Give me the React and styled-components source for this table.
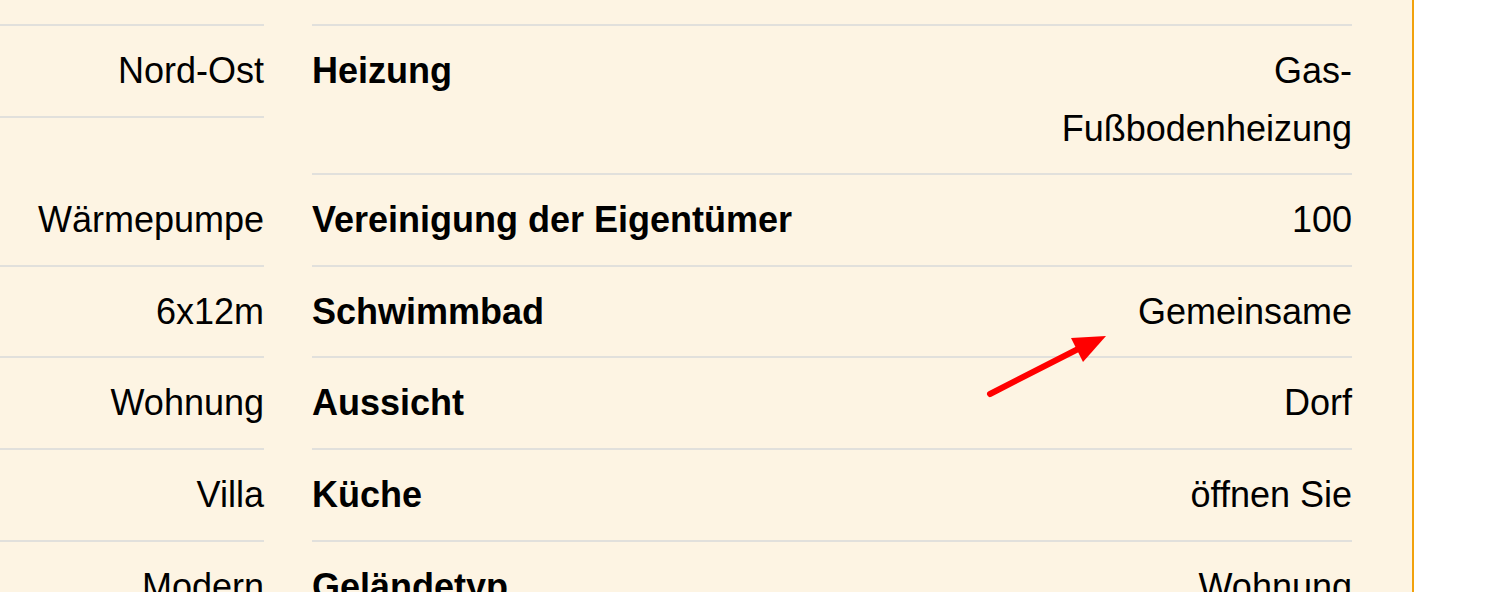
import React from "react";
import styled, { createGlobalStyle } from "styled-components";

const GlobalStyle = createGlobalStyle`
  html, body {
    margin: 0;
    padding: 0;
    background: #ffffff;
    overflow: hidden;
  }
  body {
    font-family: "Liberation Sans", Arial, sans-serif;
  }
`;

const Panel = styled.section`
  position: relative;
  box-sizing: border-box;
  width: 1414px;
  min-height: 592px;
  padding: 24px 60px 0 0;
  background: #fdf4e3;
  border-right: 2px solid #f2a20c;
  display: flex;
  gap: 48px;
  color: #000;
`;

const Column = styled.div`
  width: ${(p) => p.width || "auto"};
  flex: ${(p) => (p.grow ? 1 : "none")};
  display: flex;
  flex-direction: column;
`;

const Row = styled.div`
  display: flex;
  justify-content: space-between;
  align-items: ${(p) => (p.bottom ? "flex-end" : "flex-start")};
  min-height: ${(p) => (p.lines || 1) * 57.6}px;
  padding: 16px 0;
  border-top: 2px solid #e1e0dc;
  font-size: 36px;
  line-height: 1.6;
`;

const Label = styled.span`
  font-weight: 700;
`;

const Value = styled.span`
  text-align: right;
  margin-left: auto;
`;

const Arrow = styled.svg`
  position: absolute;
  left: 980px;
  top: 326px;
  width: 140px;
  height: 80px;
  overflow: visible;
`;

const leftRows = [
  { value: "Nord-Ost" },
  { value: "Wärmepumpe", lines: 2 },
  { value: "6x12m" },
  { value: "Wohnung" },
  { value: "Villa" },
  { value: "Modern" },
];

const rightRows = [
  { label: "Heizung", value: ["Gas-", "Fußbodenheizung"], lines: 2 },
  { label: "Vereinigung der Eigentümer", value: "100" },
  { label: "Schwimmbad", value: "Gemeinsame" },
  { label: "Aussicht", value: "Dorf" },
  { label: "Küche", value: "öffnen Sie" },
  { label: "Geländetyp", value: "Wohnung" },
];

const App = () => {
  return (
    <>
      <GlobalStyle />
      <Panel>
        <Column width="264px">
          {leftRows.map((r) => (
            <Row key={r.value} lines={r.lines} bottom>
              <Value>{r.value}</Value>
            </Row>
          ))}
        </Column>
        <Column grow>
          {rightRows.map((r) => (
            <Row key={r.label} lines={r.lines}>
              <Label>{r.label}</Label>
              <Value>
                {Array.isArray(r.value)
                  ? r.value.map((v, i) => (
                      <React.Fragment key={v}>
                        {i > 0 && <br />}
                        {v}
                      </React.Fragment>
                    ))
                  : r.value}
              </Value>
            </Row>
          ))}
        </Column>
        <Arrow viewBox="980 326 140 80">
          <line
            x1="990"
            y1="394"
            x2="1084"
            y2="346"
            stroke="#ff0000"
            strokeWidth="6"
            strokeLinecap="round"
          />
          <polygon points="1106,336 1071,338 1083,362" fill="#ff0000" />
        </Arrow>
      </Panel>
    </>
  );
};

export default App;
